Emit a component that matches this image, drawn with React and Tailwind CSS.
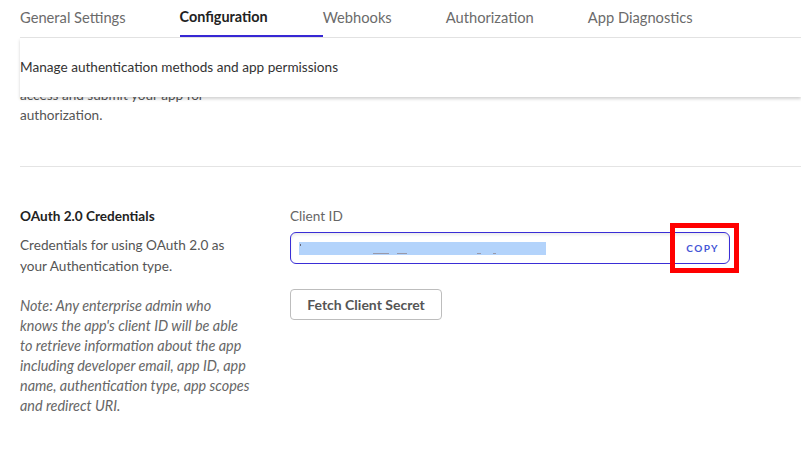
import React from "react";

const tabs = ["General Settings", "Configuration", "Webhooks", "Authorization", "App Diagnostics"];

const noteLines = [
  "Note: Any enterprise admin who",
  "knows the app's client ID will be able",
  "to retrieve information about the app",
  "including developer email, app ID, app",
  "name, authentication type, app scopes",
  "and redirect URI.",
];

export default function App() {
  return (
    <div
      className="relative w-[801px] h-[469px] overflow-hidden bg-white pl-[20px]"
      style={{ fontFamily: "Lato, 'Open Sans', sans-serif" }}
    >
      {/* Tabs */}
      <div className="flex h-[38px] border-b border-[#e4e4e4]">
        {tabs.map((t) => {
          const active = t === "Configuration";
          return (
            <div
              key={t}
              className={
                active
                  ? "h-[37px] pr-[55px] pt-[6px] text-[14.4px] font-bold text-[#222] border-b-2 border-[#3727d4]"
                  : "h-[37px] pr-[54px] pt-[6px] text-[14.7px] text-[#6b6b6b]"
              }
            >
              {t}
            </div>
          );
        })}
      </div>

      {/* Sticky header */}
      <div className="relative z-10 h-[59px] bg-white flex items-center text-[13.6px] text-[#333] shadow-[0_2px_3px_rgba(0,0,0,0.18)]">
        Manage authentication methods and app permissions
      </div>

      {/* Scrolled content */}
      <div className="-mt-[12px]">
        <div className="text-[13.6px] leading-[20px] text-[#555] w-[240px]">
          <div>access and submit your app for</div>
          <div>authorization.</div>
        </div>
        <div className="mt-[41px] border-t border-[#e4e4e4]" />

        <div className="flex pt-[39px]">
          {/* Left column */}
          <div className="w-[270px] pr-[10px]">
            <div className="text-[13.6px] leading-[20px] font-bold text-[#222]">OAuth 2.0 Credentials</div>
            <div className="mt-[9px] text-[13.6px] leading-[21px] text-[#555]">
              Credentials for using OAuth 2.0 as
              <br />
              your Authentication type.
            </div>
            <div className="mt-[19px] text-[14.4px] leading-[20px] italic text-[#666] whitespace-nowrap">
              {noteLines.map((l) => (
                <div key={l}>{l}</div>
              ))}
            </div>
          </div>

          {/* Right column */}
          <div className="flex flex-col">
            <div className="text-[13.6px] leading-[20px] text-[#666]">Client ID</div>
            <div className="mt-[6px] w-[440px] h-[32px] rounded-[6px] border border-[#3a2ed6] shadow-[inset_0_2px_3px_rgba(0,0,0,0.08)] flex items-center pl-[8px] pr-[10px]">
              <div className="w-[247px] h-[13px] bg-[#b3d3fb] flex items-end">
                <span className="ml-[1px] mb-[9px] w-[1px] h-[2px] bg-[#667]" />
                <span className="ml-[72px] mb-[1px] w-[16px] h-[1px] bg-[#99a]" />
                <span className="ml-[8px] mb-[1px] w-[10px] h-[1px] bg-[#99a]" />
                <span className="ml-[70px] mb-[1px] w-[4px] h-[1px] bg-[#99a]" />
                <span className="ml-[12px] mb-[1px] w-[3px] h-[1px] bg-[#99a]" />
              </div>
              <div className="ml-auto text-[10px] font-bold tracking-[1.4px] text-[#4456d6]">COPY</div>
            </div>
            <div className="mt-[25px] w-[152px] h-[31px] rounded-[4px] border border-[#bdbdbd] flex items-center justify-center text-[14px] font-bold text-[#555]">
              Fetch Client Secret
            </div>
          </div>
        </div>
      </div>

      {/* Red highlight box overlay */}
      <div className="absolute left-[670px] top-[223px] w-[69px] h-[50px] border-[5px] border-[#ff0000]" />
    </div>
  );
}
